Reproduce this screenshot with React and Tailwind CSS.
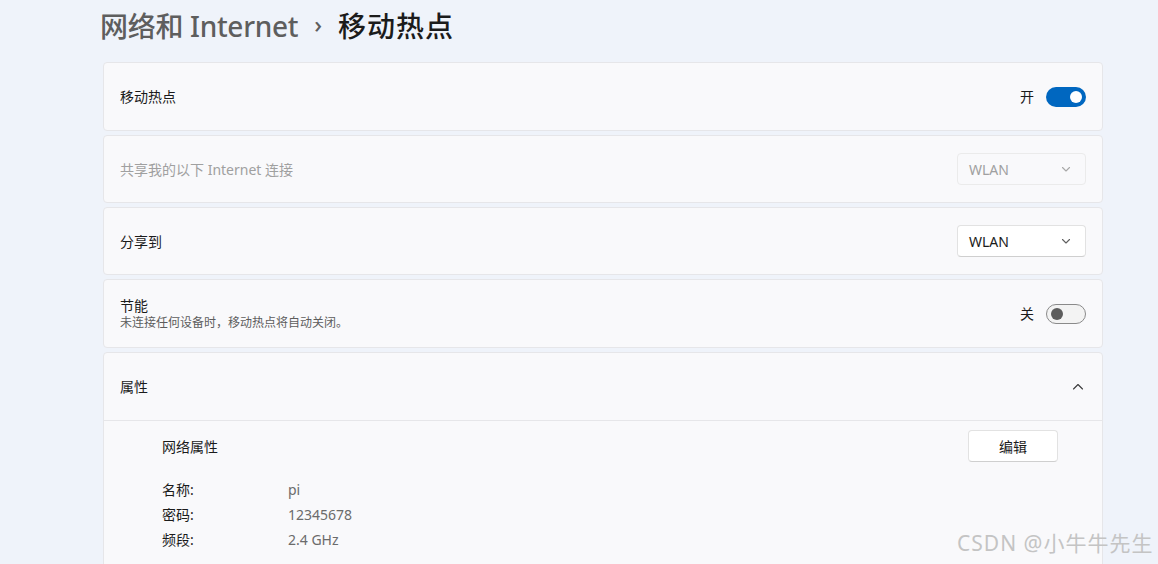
import React from "react";

const font = { fontFamily: '"Noto Sans", "Noto Sans CJK SC", sans-serif' };

function Toggle({ on }) {
  return on ? (
    <div className="w-[40px] h-[20px] rounded-full bg-[#0067c0] flex items-center justify-end pr-[4px]">
      <div className="w-[12px] h-[12px] rounded-full bg-white" />
    </div>
  ) : (
    <div className="w-[40px] h-[20px] rounded-full border border-[#8a8a8a] bg-[#f3f3f3] flex items-center pl-[4px]">
      <div className="w-[12px] h-[12px] rounded-full bg-[#5c5c5c]" />
    </div>
  );
}

function Chevron({ up, color = "#5f5f5f", size = 14 }) {
  return (
    <svg width={size} height={size} viewBox="0 0 14 14" fill="none">
      <path
        d={up ? "M2.5 9 L7 4.5 L11.5 9" : "M3.5 5.5 L7 9 L10.5 5.5"}
        stroke={color}
        strokeWidth="1.1"
        strokeLinecap="round"
        strokeLinejoin="round"
      />
    </svg>
  );
}

function Dropdown({ disabled }) {
  return (
    <div
      className={
        "w-[129px] h-[32px] rounded-[4px] border flex items-center justify-between pl-[11px] pr-[12px] text-[14px] " +
        (disabled
          ? "bg-[#f9f9fb] border-[#ebebeb] text-[#a0a0a0]"
          : "bg-white border-[#e2e2e2] border-b-[#cfcfcf] text-[#1b1b1b]")
      }
    >
      <span>WLAN</span>
      <Chevron color={disabled ? "#a8a8a8" : "#5f5f5f"} />
    </div>
  );
}

function Card({ children, className = "" }) {
  return (
    <div
      className={
        "bg-[#f9f9fb] border border-[#e6e6e9] rounded-[4px] " + className
      }
    >
      {children}
    </div>
  );
}

export default function App() {
  return (
    <div
      className="w-[1158px] h-[564px] overflow-hidden bg-[#eff3fa] relative"
      style={font}
    >
      <div className="pl-[103px] w-[1103px]">
        <div className="h-[62px] flex items-center pb-[10px] -ml-[3px]">
          <span className="text-[28px] font-medium text-[#5e5e5e] tracking-[-0.3px]">网络和 Internet</span>
          <span className="text-[24px] font-medium text-[#5e5e5e] mx-[16px] mt-[-4px]">›</span>
          <span className="text-[28px] font-medium text-[#1b1b1b] tracking-[1px]">移动热点</span>
        </div>
        <div className="flex flex-col gap-[4px]">
          <Card className="h-[69px] flex items-center justify-between pl-[16px] pr-[16px]">
            <span className="text-[14px] text-[#1b1b1b]">移动热点</span>
            <div className="flex items-center gap-[12px]">
              <span className="text-[14px] text-[#1b1b1b]">开</span>
              <Toggle on />
            </div>
          </Card>
          <Card className="h-[68px] flex items-center justify-between pl-[16px] pr-[16px]">
            <span className="text-[14px] text-[#a0a0a0]">共享我的以下 Internet 连接</span>
            <Dropdown disabled />
          </Card>
          <Card className="h-[68px] flex items-center justify-between pl-[16px] pr-[16px]">
            <span className="text-[14px] text-[#1b1b1b]">分享到</span>
            <Dropdown />
          </Card>
          <Card className="h-[69px] flex items-center justify-between pl-[16px] pr-[16px]">
            <div className="flex flex-col">
              <span className="text-[14px] leading-[18px] text-[#1b1b1b]">节能</span>
              <span className="text-[12px] leading-[16px] text-[#5d5d5d]">
                未连接任何设备时，移动热点将自动关闭。
              </span>
            </div>
            <div className="flex items-center gap-[12px]">
              <span className="text-[14px] text-[#1b1b1b]">关</span>
              <Toggle />
            </div>
          </Card>
          <Card className="h-[240px]">
            <div className="h-[68px] flex items-center justify-between pl-[16px] pr-[17px] border-b border-[#e6e6e9]">
              <span className="text-[14px] text-[#1b1b1b]">属性</span>
              <Chevron up color="#3a3a3a" />
            </div>
            <div className="pl-[58px] pr-[44px] pt-[9px]">
              <div className="flex items-center justify-between h-[32px]">
                <span className="text-[14px] text-[#1b1b1b]">网络属性</span>
                <div className="w-[90px] h-[32px] rounded-[4px] bg-white border border-[#e2e2e2] border-b-[#cfcfcf] flex items-center justify-center text-[14px] text-[#1b1b1b]">
                  编辑
                </div>
              </div>
              <div className="mt-[15px] flex flex-col">
                {[
                  ["名称:", "pi"],
                  ["密码:", "12345678"],
                  ["频段:", "2.4 GHz"],
                ].map(([k, v]) => (
                  <div key={k} className="flex h-[25px] items-center text-[14px]">
                    <span className="w-[126px] text-[#1b1b1b]">{k}</span>
                    <span className="text-[#6b6b6b]">{v}</span>
                  </div>
                ))}
              </div>
            </div>
          </Card>
        </div>
      </div>
      <div className="absolute left-[957px] top-[528px] text-[21px] text-[#c4c4c4] tracking-[1px]">
        CSDN @小牛牛先生
      </div>
    </div>
  );
}
